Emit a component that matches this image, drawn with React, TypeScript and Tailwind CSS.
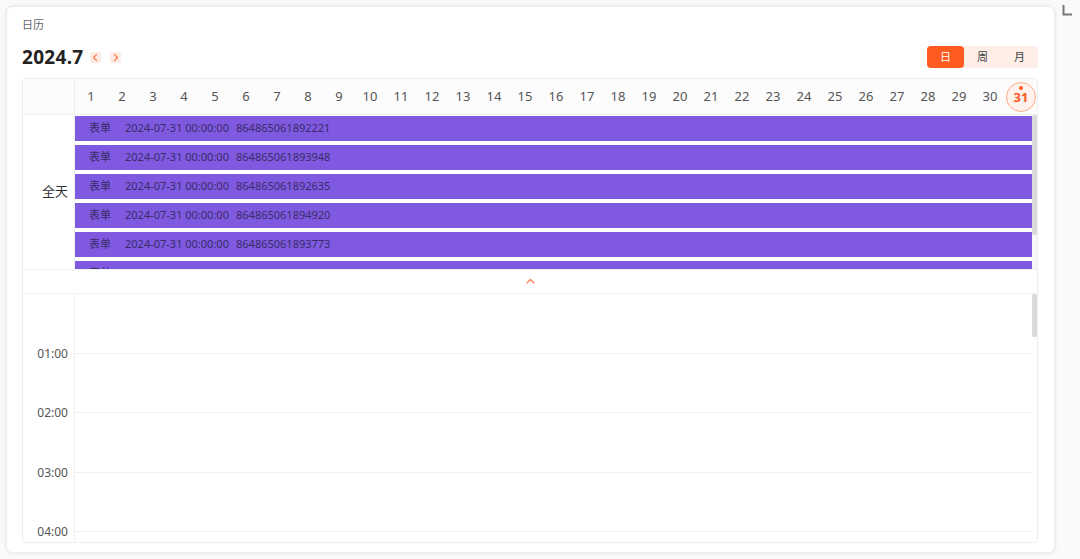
import React from "react";

const days = Array.from({ length: 31 }, (_, i) => i + 1);

const events = [
  "864865061892221",
  "864865061893948",
  "864865061892635",
  "864865061894920",
  "864865061893773",
  "864865061895305",
];

const hours = ["01:00", "02:00", "03:00", "04:00"];

function Chevron({ dir }: { dir: "left" | "right" | "up" }) {
  const d =
    dir === "left" ? "M6.5 2.5 L3.5 5.5 L6.5 8.5" : dir === "right" ? "M4.5 2.5 L7.5 5.5 L4.5 8.5" : "M2 7 L5.5 3.5 L9 7";
  return (
    <svg width="11" height="11" viewBox="0 0 11 11" fill="none">
      <path d={d} stroke="#ff7d52" strokeWidth="1.3" strokeLinecap="round" strokeLinejoin="round" />
    </svg>
  );
}

export default function App() {
  return (
    <div
      className="w-[1080px] h-[559px] bg-[#fafafa] flex overflow-hidden"
      style={{ fontFamily: '"Noto Sans", "Noto Sans CJK SC", sans-serif' }}
    >
      <div className="ml-[6px] mt-[6px] w-[1049px] h-[547px] bg-white rounded-[6px] border border-[#ececec] shadow-[0_0_4px_rgba(0,0,0,0.08)] pl-[15px] pr-[16px] pt-[10px] flex flex-col">
        <div className="text-[11px] leading-[16px] text-[#666]">日历</div>

        <div className="mt-[12px] h-[24px] flex items-center justify-between">
          <div className="flex items-center">
            <span className="text-[19px] font-bold text-[#222] leading-none tracking-[0.3px]">2024.7</span>
            <button className="ml-[7px] w-[11px] h-[11px] rounded-[2px] bg-[#fdebe4] flex items-center justify-center">
              <Chevron dir="left" />
            </button>
            <button className="ml-[9px] w-[11px] h-[11px] rounded-[2px] bg-[#fdebe4] flex items-center justify-center">
              <Chevron dir="right" />
            </button>
          </div>
          <div className="flex h-[22px] w-[111px] rounded-[4px] bg-[#fdeee8] text-[11px]">
            <div className="w-[37px] rounded-[4px] bg-[#ff5a1f] text-white flex items-center justify-center">日</div>
            <div className="w-[37px] text-[#444] flex items-center justify-center">周</div>
            <div className="w-[37px] text-[#444] flex items-center justify-center">月</div>
          </div>
        </div>

        <div className="mt-[9px] h-[465px] border border-[#ededed] rounded-[4px] flex flex-col overflow-hidden">
          {/* header */}
          <div className="h-[36px] flex border-b border-[#f0f0f0] bg-[#fcfcfc] shrink-0">
            <div className="w-[52px] border-r border-[#f0f0f0]" />
            <div className="flex-1 flex">
              {days.map((d) => (
                <div key={d} className="w-[31px] flex items-center justify-center text-[13px] text-[#555] pl-[1px]">
                  {d === 31 ? (
                    <div className="relative w-[30px] h-[30px] rounded-full border border-[#ffab8a] bg-[#fff1eb] flex items-center justify-center text-[#ff5a1f] font-bold">
                      <span className="absolute top-[3px] w-[4px] h-[4px] rounded-full bg-[#ff5a1f]" />
                      <span className="mt-[3px]">31</span>
                    </div>
                  ) : (
                    d
                  )}
                </div>
              ))}
            </div>
          </div>

          {/* all day */}
          <div className="h-[155px] flex border-b border-[#f0f0f0] shrink-0">
            <div className="w-[52px] border-r border-[#f0f0f0] flex items-center justify-end pr-[6px] text-[13px] text-[#333]">
              全天
            </div>
            <div className="flex-1 flex overflow-hidden">
              <div className="flex-1 pt-[1px] overflow-hidden">
                {events.map((n) => (
                  <div
                    key={n}
                    className="h-[25px] mb-[4px] bg-[#7f5ae0] flex items-center pl-[14px] text-[11px] text-[#3a2a6a] whitespace-nowrap"
                  >
                    <span className="w-[36px]">表单</span>
                    <span className="w-[111px]">2024-07-31 00:00:00</span>
                    <span>{n}</span>
                  </div>
                ))}
              </div>
              <div className="w-[5px] bg-[#f7f7f7]">
                <div className="h-[120px] bg-[#d9d9d9] rounded-[2px]" />
              </div>
            </div>
          </div>

          {/* collapse */}
          <div className="h-[24px] flex items-center justify-center border-b border-[#f0f0f0] shrink-0">
            <Chevron dir="up" />
          </div>

          {/* time grid */}
          <div className="flex-1 flex overflow-hidden">
            <div className="w-[52px] border-r border-[#f0f0f0] pt-[30px] shrink-0">
              {hours.map((h) => (
                <div key={h} className="h-[59.5px] flex items-center justify-end pr-[6px] text-[12px] text-[#555]">
                  {h}
                </div>
              ))}
            </div>
            <div className="flex-1 flex">
              <div className="flex-1">
                {hours.map((h) => (
                  <div key={h} className="h-[59.5px] border-b border-[#f0f0f0]" />
                ))}
              </div>
              <div className="w-[5px]">
                <div className="h-[43px] bg-[#d9d9d9] rounded-[2px]" />
              </div>
            </div>
          </div>
        </div>
      </div>

      <div className="flex-1 flex justify-start pl-[7px] pt-[4px]">
        <svg width="12" height="12" viewBox="0 0 12 12">
          <path d="M1.5 1 V10.5 H10" fill="none" stroke="#777" strokeWidth="2" />
        </svg>
      </div>
    </div>
  );
}
